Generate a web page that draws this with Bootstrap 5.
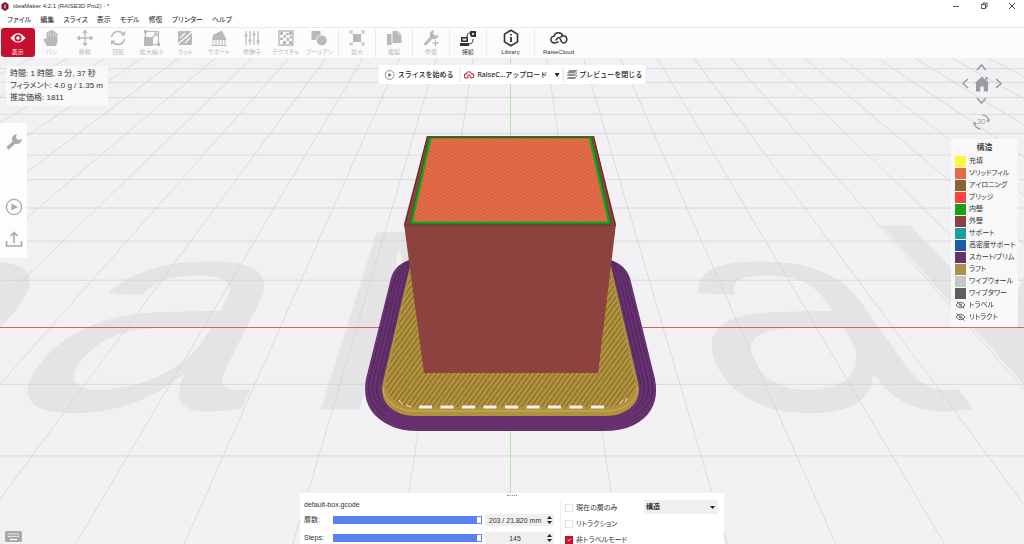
<!DOCTYPE html>
<html lang="ja">
<head>
<meta charset="utf-8">
<meta name="viewport" content="width=device-width, initial-scale=1">
<title>ideaMaker 4.2.1 (RAISE3D Pro2)</title>
<link href="https://cdn.jsdelivr.net/npm/bootstrap@5.3.0/dist/css/bootstrap.min.css" rel="stylesheet">
<style>
body{font-family:"Liberation Sans","Noto Sans CJK JP",sans-serif;font-size:7px;line-height:10px;color:#333;font-feature-settings:"palt";background:#fff}
button,input,select{font:inherit;color:inherit;font-feature-settings:inherit}
button{border:0;background:none;padding:0}
svg{display:block}
.titlebar{height:12px;font-size:6px}
.menus{height:15px;gap:9px;padding-left:7px}
.menus a{color:#222;text-decoration:none}
.tools{height:31px;background:#fcfcfc;border-top:1px solid #ececec;font-size:6px}
.edit{width:338px;padding-right:2px}
.edit .tool{flex:1 1 0;min-width:0}
.tool{height:30px;display:flex;flex-direction:column;align-items:center;justify-content:flex-end;color:#b9b9bb;line-height:9px;white-space:nowrap;padding-bottom:1px}
.tool svg{width:18px;height:18px;margin-bottom:1px}
.tool.active{background:#c8102e;color:#fff;border-radius:3px;margin-left:1px;height:29px;padding-bottom:0}
.tool.sep{width:37px;border-left:1px solid #ececec}
.tool.wide{width:48px}
.tool.on{color:#333}
.stage{background:#f1f1f4}
.bed{left:50%;top:0;width:0;height:0;transform-origin:0 0;transform:matrix3d(.7652,0,0,0,.00199,.24775,0,-.000995,0,0,1,0,-2,269.1,0,1)}
.bedname{display:flex;gap:46px;margin:-309px 0 0 -936px;width:max-content;font:528px/1 "Liberation Sans",sans-serif;color:#e4e4e6}
.scene{width:1024px;height:486px;overflow:visible}
.info{left:6px;top:8px;width:102px;padding:2px 4px;background:#f8f8f9;font-size:8px;line-height:12px;white-space:nowrap;height:40px}
.actions{top:7px;height:19px;background:#fff;font-size:7px;font-feature-settings:normal;font-weight:500;white-space:nowrap;color:#222;font-family:"Noto Sans","Noto Sans CJK JP",sans-serif}
.actions>button{height:15px;display:flex;align-items:center;gap:3px;padding:0 6px}
.actions>button+button{border-left:1px solid #ddd;padding:0 3px}
.actions>button:nth-child(3){gap:2px}
.rail{top:65px;width:27px;height:135px;background:#fdfdfd;color:#aaabad}
.rail button{height:32px;display:flex;justify-content:center;align-items:center}
.rail button:first-child{height:38px;margin-bottom:30px}
.orbit{right:17px;top:0;color:#9b9ca0;display:grid;grid-template-columns:repeat(3,17px);grid-auto-rows:17px;width:51px}
.orbit button{display:flex;align-items:center;justify-content:center}
.orbit .mid{grid-column:2}
.orbit .spin{grid-column:2;margin-top:9px}
.legend{right:6px;top:81px;width:67px;background:#f8f8f9;padding:4px 4px;height:188px;white-space:nowrap}
.legend h2{font-size:8px;line-height:10px;text-align:center;margin:0 0 2px;font-weight:500}
.legend li{display:flex;align-items:center;gap:3px;height:12px}
.sw{width:11px;height:11px;flex:none;background:var(--c)}
.kbd{left:5px;bottom:2px;color:#a9aaac}
.dock{bottom:0;width:424px;height:51px;background:#fff;padding:7px 4px 0;white-space:nowrap}
.grip{top:2px;width:10px;border-top:1px dotted #888}
.layers{width:250px}
.layers>div:first-child{margin-bottom:1px}
.layers .line{height:18px;display:flex;align-items:center}
.layers label{width:29px}
.track{-webkit-appearance:none;appearance:none;width:149px;height:8px;margin:0 3px 0 0;background:#5b80f0;display:block}
.track::-webkit-slider-thumb{-webkit-appearance:none;width:6px;height:8px;background:#fff;border:1px solid #5b80f0}
.field{width:69px;height:12px;background:#efeff0;display:flex;align-items:center}
.field input{width:60px;border:0;background:none;text-align:center;padding:0;height:12px}
.field div{display:flex;flex-direction:column;width:9px;gap:2px;align-items:center}
.checks{width:84px;border-left:1px solid #f0f0f0;margin-left:6px;padding-left:4px}
.checks div{height:16px;display:flex;align-items:center;gap:3px}
.checks input{width:8px;height:8px;margin:0;border:1px solid #e2e2e2}
.checks input[type=checkbox]{border-radius:0}
.checks input:checked{background-color:#c8102e;border-color:#c8102e}
.view{width:74px;height:14px;border:0;background-color:#f0f0f1;border-radius:1px;padding:0 2px;font-weight:bold;appearance:none;font-size:7px}
.caret{right:3px;top:6px;pointer-events:none}
</style>
</head>
<body class="vh-100 d-flex flex-column overflow-hidden">
<header>
  <div class="titlebar d-flex align-items-center">
    <svg class="ms-0 me-1" width="9" height="9" viewBox="0 0 9 9"><path d="M5 0l3.500 2.200v4.600L5 9 1.500 6.800V2.200z" fill="#8e1027"/><path d="M5 2.500v4" stroke="#fff"/></svg>
    <span class="flex-fill">ideaMaker 4.2.1 (RAISE3D Pro2) - *</span>
    <div class="d-flex gap-3 pe-2">
      <button aria-label="最小化" class="me-1"><svg width="8" height="8" viewBox="0 0 8 8"><path d="M1 4.500h6" stroke="#555"/></svg></button>
      <button aria-label="元に戻す" class="me-1"><svg width="8" height="8" viewBox="0 0 8 8" fill="none" stroke="#555"><path d="M1.500 2.500h4v4h-4zM3 2.500v-1.500h4v4H5.500"/></svg></button>
      <button aria-label="閉じる"><svg width="8" height="8" viewBox="0 0 8 8"><path d="M1 1l6 6M7 1L1 7" stroke="#444"/></svg></button>
    </div>
  </div>
  <nav class="menus d-flex align-items-center text-nowrap">
    <a href="#">ファイル</a><a href="#">編集</a><a href="#">スライス</a><a href="#">表示</a><a href="#">モデル</a><a href="#">修復</a><a href="#">プリンター</a><a href="#">ヘルプ</a>
  </nav>
  <div class="tools d-flex">
    <div class="edit d-flex">
    <button class="tool active"><svg viewBox="0 0 18 18"><path d="M1.500 9Q9-.5 16.500 9 9 18 1.500 9z" fill="#fff"/><circle cx="9" cy="9" r="3.500" fill="#c8102e"/><circle cx="9" cy="9" r="1.800" fill="#fff"/></svg>表示</button>
    <button class="tool"><svg viewBox="0 0 18 18" fill="currentColor"><path d="M4.500 17C4 14 1 12.500 2 10c1-1 2 0 2.500.5V4a1 1 0 012 0V2.500a1.200 1.200 0 012.300 0V2a1.200 1.200 0 012.400 0v1a1.200 1.200 0 012.300 0v2a1 1 0 012 0v7c0 2-1 3-1.500 5z"/><path d="M6.700 4v4M9 3.500V8M11.400 3.500V8M13.700 5v3" stroke="#eee" stroke-width=".5"/></svg>パン</button>
    <button class="tool"><svg viewBox="0 0 18 18" fill="none" stroke="currentColor" stroke-width="1.300"><path d="M9 2v14M2 9h14M7 4l2-2.500L11 4M7 14l2 2.500 2-2.500M4 7L1.500 9 4 11M14 7l2.500 2-2.500 2"/></svg>移動</button>
    <button class="tool"><svg viewBox="0 0 18 18" fill="none" stroke="currentColor" stroke-width="1.600"><path d="M2.500 8A6.600 6.600 0 0114.500 5.500M15.500 10A6.600 6.600 0 013.500 12.500"/><path d="M16 2v4.500h-4.500zM2 16v-4.500h4.500z" fill="currentColor" stroke="none"/></svg>回転</button>
    <button class="tool"><svg viewBox="0 0 18 18"><path d="M2.500 2.500h13v13h-13z" fill="none" stroke="currentColor" stroke-width="1.200"/><path d="M1 8h9v9H1zM1 1h3v3H1zM14 14h3v3h-3z" fill="currentColor"/><path d="M9.500 8.500L14 4m-3.500 0H14v3.500" fill="none" stroke="currentColor" stroke-width="1.200"/></svg>拡大縮小</button>
    <button class="tool"><svg viewBox="0 0 18 18"><rect x="2" y="2" width="14" height="14" rx="1.500" fill="currentColor"/><path d="M2 15L16 3M4 9l5-5M9 14l5-5" stroke="#fff" stroke-width="1.100"/></svg>カット</button>
    <button class="tool"><svg viewBox="0 0 18 18" fill="currentColor"><path d="M3 6l9-4.500 4.500 9.500H2z"/><path d="M3 11v5M6 11v5M9 11v5M12 11v5M15 11v5M1.500 16.500h15" stroke="currentColor"/></svg>サポート</button>
    <button class="tool"><svg viewBox="0 0 18 18" stroke="currentColor" stroke-width="1.200"><path d="M3 2v14M7 2v14M11 2v14M15 2v14M1.500 6h3M5.500 11h3M9.500 5h3M13.500 12h3"/><path d="M1.500 7h3M5.500 12h3M9.500 6h3M13.500 13h3"/></svg>修飾子</button>
    <button class="tool"><svg viewBox="0 0 18 18"><path d="M2 2h14v14H2z" fill="none" stroke="currentColor" stroke-width="1.400"/><path d="M3 3h3v3H3zM12 3h3v3h-3zM6.500 6h2.500v3H6.500zM9 4h2.500v2H9zM9.500 9H12v3H9.500zM12.500 7H15v2.500h-2.500zM3 8.500h3V11H3zM6 12h3v3H6zM12 12h3v3h-3z" fill="currentColor"/></svg>テクスチャ</button>
    <button class="tool"><svg viewBox="0 0 18 18" fill="currentColor"><path d="M1.500 2h9v4A6 6 0 006 11H1.500z"/><circle cx="11.800" cy="11.500" r="5"/></svg>ブーリアン</button>
    </div>
    <button class="tool sep"><svg viewBox="0 0 18 18"><path d="M5 5h8v8H5z" fill="currentColor"/><path d="M2 5V2h3M13 2h3v3M16 13v3h-3M5 16H2v-3M2 2l3 3M16 2l-3 3M2 16l3-3M16 16l-3-3" fill="none" stroke="currentColor"/></svg>最大</button>
    <button class="tool sep"><svg viewBox="0 0 18 18" fill="currentColor"><path d="M2 5h4.500v11H2zM7.500 2H13l3.500 3.500V14h-9z"/><path d="M13 2v3.500h3.500" fill="none" stroke="#fff" stroke-width=".6"/></svg>複製</button>
    <button class="tool sep"><svg viewBox="0 0 18 18"><path d="M3.500 15L10 8" stroke="currentColor" stroke-width="3" stroke-linecap="round"/><path d="M12 1.200L11 4.200 13.500 6.700 16.500 5.700A4.600 4.600 0 0110.500 10L8 7.500A4.600 4.600 0 0112 1.200z" fill="currentColor"/><path d="M13.500 11v6M10.500 14h6" stroke="currentColor" stroke-width="1.300"/></svg>修復</button>
    <button class="tool sep on"><svg viewBox="0 0 18 18" fill="currentColor"><path d="M2 8h7v5H2zM1 14h9v3H1zM11 2h6v6h-4.500L11 6.500z"/><path d="M3.500 9.500h4v2h-4zM13 4h2v2h-2z" fill="#ddd"/><path d="M8 8c0-3 1-4 3-4M10 15c3 0 4-2 4-5" fill="none" stroke="currentColor"/></svg>接続</button>
    <button class="tool sep wide on"><svg viewBox="0 0 18 18"><path d="M9 1.200l6.500 3.900v7.800L9 16.800l-6.500-3.900V5.100z" fill="none" stroke="currentColor" stroke-width="1.600"/><path d="M9 8v5M9 5v1.500" stroke="currentColor" stroke-width="1.800"/></svg>Library</button>
    <button class="tool sep wide on"><svg viewBox="0 0 18 18" fill="none" stroke="currentColor" stroke-width="1.500"><path d="M8.500 12.500Q7 14 4.500 14a3.400 3.400 0 01-.4-6.800C5 2.800 11.500 2.500 12.800 6.800c2.200 0 4 1.300 4 3.600A3.500 3.500 0 0113.300 14C10.500 14 11 8.500 8.800 8.500c-1.800 0-1.800 2.500-3.300 2.500M10.500 8.500q.8-1.500 2.300-1.700"/></svg>RaiseCloud</button>
  </div>
</header>

<main class="stage position-relative flex-fill overflow-hidden">
  <div class="bed position-absolute" aria-hidden="true"><div class="bedname"><span>e</span><span>a</span><span>M</span><span>a</span><span>k</span></div></div>
  <svg class="scene position-absolute top-0 start-50 translate-middle-x" viewBox="0 58 1024 486" fill="none" aria-hidden="true">
    <defs>
      <pattern id="fill" width="3" height="3" patternUnits="userSpaceOnUse" patternTransform="rotate(28)"><path d="M0 0h3v3H0z" fill="#e66c47"/><path d="M0 0h3v1H0z" fill="#cf6140"/></pattern>
      <pattern id="raft" width="4" height="4" patternUnits="userSpaceOnUse" patternTransform="rotate(36)"><path d="M0 0h4v4H0z" fill="#b5963f"/><path d="M0 0h1.500v4H0z" fill="#8a702e"/></pattern>
    </defs>
    <path id="grid" stroke="#d3d3d6" stroke-width=".7"/>
    <path d="M-1000 327h3024v1H-1000z" fill="#e0605f"/>
    <path d="M510.500 58v486" stroke="#b9dfb5"/>
    <path d="M415 258Q395 263 391 278L366 379Q360 412 391 426 401 431 418 431H603Q622 431 634 425 661 411 655 379L630 278Q625 263 605 258z" fill="#67306e"/>
    <g stroke="#4b2458" stroke-width=".8">
      <path d="M411 261Q398 267 394 280L369 381Q365 404 387 417M409 263Q400 270 397 282L373 382Q369 400 387 411M409 265Q402 273 400 284L377 383Q374 396 385 407M409 268L403 286 380 384"/>
      <path d="M610 261Q623 267 627 280L652 381Q656 404 634 417M612 263Q621 270 624 282L648 382Q652 400 634 411M612 265Q619 273 621 284L644 383Q647 396 636 407M612 268L618 286 641 384"/>
    </g>
    <path d="M410 266L384 378Q377 402 397 412 404 416 416 416H605Q617 416 624 412 644 402 637 378L611 266z" fill="#b0913c"/>
    <path d="M383 387Q383 400 397 407 404 411 416 411H605Q617 411 624 407 638 400 638 387" stroke="#ceb05b"/>
    <path d="M410 272L387 377Q382 394 398 403 406 407 418 407H602Q615 407 623 403 639 394 634 377L611 272z" fill="url(#raft)"/>
    <path d="M419 407h187" stroke="#fff0eb" stroke-width="3" stroke-dasharray="13 8.500"/>
    <path d="M399 400l3 4M406 405l5 2M620 404l3-4M625 402l2-4" stroke="#f5ded5"/>
    <path d="M404 224L427 136H594L616 224 598 373H424z" fill="#8e423f"/>
    <path d="M427 136.500H594" stroke="#69532d"/>
    <path d="M405 225L427.500 136M615 225L593.500 136" stroke="#5e2e2e"/>
    <path d="M410 224L429 137.500H591.500L611 224z" fill="#17a51e" stroke="#156d1b" stroke-width=".8"/>
    <path d="M413 221.500L431.500 138.500H589L607.500 221.500z" fill="url(#fill)"/>
    <path d="M404 225.500H616" stroke="#783a36"/>
  </svg>

  <section class="info position-absolute"><div>時間: 1 時間, 3 分, 37 秒</div><div>フィラメント: 4.0 g / 1.35 m</div><div>推定価格: 1811</div></section>

  <div class="actions position-absolute start-50 translate-middle-x d-flex align-items-center">
    <button><svg width="10" height="10" viewBox="0 0 10 10"><circle cx="5" cy="5" r="4.400" fill="none" stroke="#777" stroke-width=".8"/><path d="M3.800 3l3.200 2-3.200 2z" fill="#666"/></svg>スライスを始める</button>
    <button><svg width="11" height="10" viewBox="0 0 18 16" fill="none" stroke="#cf2445" stroke-width="1.800"><path d="M8.500 11.500Q7 13 4.500 13a3.400 3.400 0 01-.4-6.800C5 1.800 11.500 1.500 12.800 5.800c2.200 0 4 1.300 4 3.600A3.500 3.500 0 0113.300 13C10.500 13 11 7.500 8.800 7.500c-1.800 0-1.800 2.500-3.300 2.500"/></svg>RaiseC...アップロード<svg class="ms-1" width="5" height="4" viewBox="0 0 5 4"><path d="M0 0h5L2.500 4z" fill="#222"/></svg></button>
    <button><svg width="11" height="10" viewBox="0 0 11 10" fill="#8b8b8d"><path d="M3 0h8L8 3.500H0zM1.500 4.200h7L11 1.500v1.300L8.300 6H0zM1.500 7h7L11 4v1.500L8.300 9H0z"/></svg>プレビューを閉じる</button>
  </div>

  <div class="rail position-absolute start-0 d-flex flex-column">
    <button aria-label="設定"><svg width="18" height="18" viewBox="0 0 18 18"><path d="M2.500 15.500L10 8.500" stroke="currentColor" stroke-width="3.500"/><path d="M12 1.200L10.800 4.500 13.500 7.200 16.800 6A4.800 4.800 0 0110 10.500L7.500 8A4.800 4.800 0 0112 1.200z" fill="currentColor"/></svg></button>
    <button aria-label="スライス"><svg width="18" height="18" viewBox="0 0 18 18"><circle cx="9" cy="9" r="7.600" fill="none" stroke="currentColor" stroke-width="1.400"/><path d="M6.500 5.500l6.500 3.500-6.500 3.500z" fill="currentColor"/></svg></button>
    <button aria-label="書き出し"><svg width="18" height="18" viewBox="0 0 18 18" fill="none" stroke="currentColor" stroke-width="1.700"><path d="M1.500 11v5h15v-5M9 13V2.500M5.500 6L9 2.500 12.500 6"/></svg></button>
  </div>

  <div class="orbit position-absolute">
    <button class="mid" aria-label="上"><svg width="11" height="8" viewBox="0 0 11 8"><path d="M1 7l4.500-5L10 7" fill="none" stroke="currentColor" stroke-width="1.600"/></svg></button>
    <button style="grid-column:1" aria-label="左"><svg width="8" height="11" viewBox="0 0 8 11"><path d="M7 1L2 5.500 7 10" fill="none" stroke="currentColor" stroke-width="1.600"/></svg></button>
    <button aria-label="ホーム"><svg width="16" height="16" viewBox="0 0 16 16" fill="currentColor"><path d="M8 .5l7.500 7H14V15.500h-4.200v-5H6.200v5H2V7.500H.5zM11.500 1h2v4l-2-2z"/></svg></button>
    <button aria-label="右"><svg width="8" height="11" viewBox="0 0 8 11"><path d="M1 1l5 4.500L1 10" fill="none" stroke="currentColor" stroke-width="1.600"/></svg></button>
    <button class="mid" aria-label="下"><svg width="11" height="8" viewBox="0 0 11 8"><path d="M1 1l4.500 5L10 1" fill="none" stroke="currentColor" stroke-width="1.600"/></svg></button>
    <button class="spin" aria-label="3D"><svg width="18" height="18" viewBox="0 0 18 18"><path d="M10 1.500a7.500 7.500 0 016.500 6.500M8 16.500A7.500 7.500 0 011.500 10M14.500 7l2 1.500L17.500 6M.7 12l1-2.500 2 1.500" fill="none" stroke="currentColor" stroke-width="1.200"/><text x="9" y="11.500" text-anchor="middle" font-size="7" fill="currentColor">3D</text></svg></button>
  </div>

  <section class="legend position-absolute">
    <h2>構造</h2>
    <ul class="list-unstyled m-0">
      <li><span class="sw" style="--c:#fbf53f"></span>充填</li>
      <li><span class="sw" style="--c:#e66c47"></span>ソリッドフィル</li>
      <li><span class="sw" style="--c:#8a6330"></span>アイロニング</li>
      <li><span class="sw" style="--c:#fc4147"></span>ブリッジ</li>
      <li><span class="sw" style="--c:#18a018"></span>内壁</li>
      <li><span class="sw" style="--c:#8c4340"></span>外壁</li>
      <li><span class="sw" style="--c:#1d9fa0"></span>サポート</li>
      <li><span class="sw" style="--c:#1c5ca6"></span>高密度サポート</li>
      <li><span class="sw" style="--c:#633369"></span>スカート/ブリム</li>
      <li><span class="sw" style="--c:#ad904a"></span>ラフト</li>
      <li><span class="sw" style="--c:#c5c8c6"></span>ワイプウォール</li>
      <li><span class="sw" style="--c:#5d5e60"></span>ワイプタワー</li>
      <li><svg width="11" height="8" viewBox="0 0 11 8" fill="none" stroke="#666"><path d="M1 4q4.500-5.500 9 0-4.500 5.500-9 0zM1.500.5l8 7"/><circle cx="5.500" cy="4" r="1"/></svg>トラベル</li>
      <li><svg width="11" height="8" viewBox="0 0 11 8" fill="none" stroke="#666"><path d="M1 4q4.500-5.500 9 0-4.500 5.500-9 0zM1.500.5l8 7"/><circle cx="5.500" cy="4" r="1"/></svg>リトラクト</li>
    </ul>
  </section>

  <button class="kbd position-absolute" aria-label="キーボード"><svg width="17" height="11" viewBox="0 0 17 11"><rect width="17" height="11" rx="1.500" fill="currentColor"/><path d="M3 3h11M3 5.500h11" stroke="#fff" stroke-dasharray="1.500 .8" stroke-width="1.200"/><path d="M5 8.500h7" stroke="#fff" stroke-width="1.200"/></svg></button>

  <section class="dock position-absolute start-50 translate-middle-x d-flex">
    <span class="grip position-absolute start-50 translate-middle-x"></span>
    <div class="layers">
      <div>default-box.gcode</div>
      <div class="line"><label for="layer">層数:</label><input id="layer" class="track" type="range" min="0" max="203" value="203">
        <div class="field"><input aria-label="層の位置" value="203 / 21.820 mm"><div><button aria-label="増やす"><svg width="5" height="3" viewBox="0 0 5 3"><path d="M0 3h5L2.500 0z" fill="#222"/></svg></button><button aria-label="減らす"><svg width="5" height="3" viewBox="0 0 5 3"><path d="M0 0h5L2.500 3z" fill="#222"/></svg></button></div></div></div>
      <div class="line"><label for="step">Steps:</label><input id="step" class="track" type="range" min="0" max="145" value="145">
        <div class="field"><input aria-label="ステップの位置" value="145"><div><button aria-label="増やす"><svg width="5" height="3" viewBox="0 0 5 3"><path d="M0 3h5L2.500 0z" fill="#222"/></svg></button><button aria-label="減らす"><svg width="5" height="3" viewBox="0 0 5 3"><path d="M0 0h5L2.500 3z" fill="#222"/></svg></button></div></div></div>
    </div>
    <div class="checks">
      <div><input class="form-check-input" type="checkbox" id="c1"><label for="c1">現在の層のみ</label></div>
      <div><input class="form-check-input" type="checkbox" id="c2"><label for="c2">リトラクション</label></div>
      <div><input class="form-check-input" type="checkbox" id="c3" checked><label for="c3">非トラベルモード</label></div>
    </div>
    <div class="position-relative align-self-start"><select class="view" aria-label="表示方法"><option>構造</option></select><svg class="caret position-absolute" width="5" height="3" viewBox="0 0 5 3"><path d="M0 0h5L2.500 3z" fill="#222"/></svg></div>
  </section>
</main>
<script src="https://cdn.jsdelivr.net/npm/bootstrap@5.3.0/dist/js/bootstrap.bundle.min.js"></script>
<script>
// Build-plate grid: lines meet at (510,-191); rows are equally spaced in depth.
let d = '';
for (let n = -26; n <= 26; n++) if (n) d += `M${510 + n * 36.8} 58L${510 + n * 108.6} 544`;
for (let k = -3; k <= 10; k++) if (k) d += `M-1000 ${-191 + 1 / (0.00193 + 0.000192 * k)}h3024`;
document.getElementById('grid').setAttribute('d', d);
</script>
</body>
</html>
